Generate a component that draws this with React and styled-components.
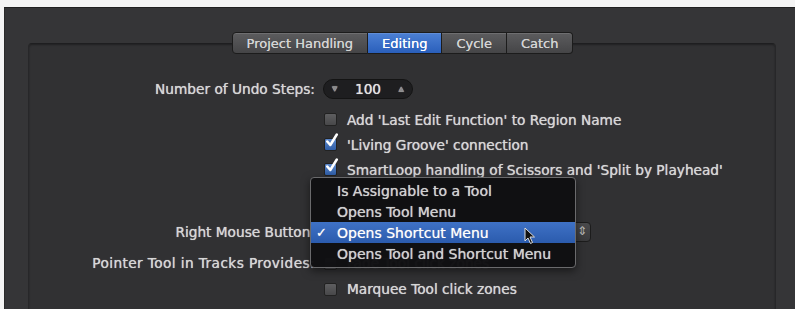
import React from 'react';
import styled, { createGlobalStyle } from 'styled-components';

const Global = createGlobalStyle`
    body {
        margin: 0;
        background: #f4f4f4;
        font-family: 'DejaVu Sans', 'Liberation Sans', sans-serif;
    }
`

const tabs = ['Project Handling', 'Editing', 'Cycle', 'Catch']

const menuItems = [
    { label: 'Is Assignable to a Tool' },
    { label: 'Opens Tool Menu' },
    { label: 'Opens Shortcut Menu', checked: true },
    { label: 'Opens Tool and Shortcut Menu' },
]

const Check = () => (
    <svg width="15" height="16" viewBox="0 0 15 16">
        <path d="M3.3 8.5 L6.3 12 L12.8 1.5" fill="none" stroke="#fff" strokeWidth="2.5" strokeLinecap="round" strokeLinejoin="round" />
    </svg>
)

const CheckBox = ({ checked }) => (
    <Box $checked={checked}>
        {checked && <CheckMark><Check /></CheckMark>}
    </Box>
)

const Cursor = () => (
    <CursorWrap>
        <svg width="12" height="18" viewBox="0 0 12 18">
            <path d="M1 1 L1 14 L4 11 L6.5 16.5 L8.5 15.5 L6 10 L10.5 10 Z" fill="#111" stroke="#ddd" strokeWidth="1" strokeLinejoin="round" />
        </svg>
    </CursorWrap>
)

const App = () => {
    return (
        <>
            <Global />
            <Window>
                <TabBar>
                    {tabs.map(t => (
                        <Tab key={t} $active={t === 'Editing'}>{t}</Tab>
                    ))}
                </TabBar>
                <Group>
                    <Form>
                        <Row $h={28}>
                            <Label>Number of Undo Steps:</Label>
                            <Stepper>
                                <Arrow>▼</Arrow>
                                <span>100</span>
                                <Arrow>▲</Arrow>
                            </Stepper>
                        </Row>
                        <Row $h={25} $mt={4}>
                            <Label />
                            <Option><CheckBox />Add 'Last Edit Function' to Region Name</Option>
                        </Row>
                        <Row $h={25}>
                            <Label />
                            <Option><CheckBox checked />'Living Groove' connection</Option>
                        </Row>
                        <Row $h={25}>
                            <Label />
                            <Option><CheckBox checked />SmartLoop handling of Scissors and 'Split by Playhead'</Option>
                        </Row>
                        <Row $h={37} />
                        <Row $h={26}>
                            <Label>Right Mouse Button:</Label>
                            <Popup><PopupArrows>⇕</PopupArrows></Popup>
                        </Row>
                        <Row $h={26} $mt={5}>
                            <Label $wide>Pointer Tool in Tracks Provides:</Label>
                            <Option $faded><CheckBox />Fade Tool click zones</Option>
                        </Row>
                        <Row $h={26}>
                            <Label />
                            <Option><CheckBox />Marquee Tool click zones</Option>
                        </Row>
                    </Form>
                </Group>
                <Menu>
                    {menuItems.map(m => (
                        <MenuItem key={m.label} $selected={m.checked}>
                            <Tick>{m.checked ? '✓' : ''}</Tick>
                            {m.label}
                        </MenuItem>
                    ))}
                    <Cursor />
                </Menu>
            </Window>
        </>
    )
}

const Window = styled.div`
    position: relative;
    margin: 7px 0 0 4px;
    height: 302px;
    overflow: hidden;
    background: #353537;
    border-top: 1px solid #202020;
    box-shadow: inset 1px 0 0 #2a2a2a;
`

const TabBar = styled.div`
    position: relative;
    z-index: 1;
    display: flex;
    justify-content: center;
    margin: 24px 0 -11px 6px;
    height: 22px;
`

const Tab = styled.div`
    display: flex;
    align-items: center;
    padding: 0 14px;
    font-size: 13px;
    color: ${p => p.$active ? '#fff' : '#d4d4d4'};
    background: ${p => p.$active
        ? 'linear-gradient(#4c80d4, #2a5fbb)'
        : 'linear-gradient(#5c5c5e, #454547)'};
    border: 1px solid #1c1c1c;
    border-left-width: 0;
    box-shadow: inset 0 1px 0 rgba(255,255,255,0.12);
    text-shadow: 0 0 0.6px currentColor;
    &:first-child {
        border-left-width: 1px;
        border-radius: 4px 0 0 4px;
    }
    &:last-child {
        border-radius: 0 4px 4px 0;
    }
`

const Group = styled.div`
    margin: 0 19px 0 24px;
    height: 300px;
    background: #313133;
    border: 1px solid #272729;
    border-top-color: #1e1e20;
    border-radius: 4px;
    box-shadow: inset 0 1px 2px rgba(0,0,0,0.35);
`

const Form = styled.div`
    padding-top: 31px;
    display: flex;
    flex-direction: column;
`

const Row = styled.div`
    display: flex;
    align-items: center;
    gap: 8px;
    height: ${p => p.$h}px;
    margin-top: ${p => p.$mt || 0}px;
`

const Label = styled.div`
    width: 286px;
    flex: none;
    text-align: right;
    font-size: 13.7px;
    letter-spacing: ${p => p.$wide ? '0.4px' : '0'};
    color: #d6d6d6;
    white-space: nowrap;
    text-shadow: 0 0 0.7px #d6d6d6;
`

const Stepper = styled.div`
    display: flex;
    align-items: center;
    justify-content: space-between;
    width: 90px;
    height: 20px;
    box-sizing: border-box;
    padding: 0 8px;
    border-radius: 10px;
    background: #1e1e20;
    border: 1px solid #141414;
    font-size: 13.7px;
    color: #e4e4e4;
    text-shadow: 0 0 0.7px #e4e4e4;
`

const Arrow = styled.span`
    font-size: 7px;
    color: #8a8a8a;
`

const Option = styled.div`
    display: flex;
    align-items: center;
    gap: 10px;
    font-size: 13.7px;
    color: ${p => p.$faded ? '#9a9a9a' : '#d6d6d6'};
    white-space: nowrap;
    text-shadow: 0 0 0.7px #d6d6d6;
`

const Box = styled.span`
    position: relative;
    width: 11px;
    height: 11px;
    flex: none;
    margin-left: 1px;
    border-radius: 2px;
    background: ${p => p.$checked
        ? 'linear-gradient(#5b86c8, #2f5ea8)'
        : 'linear-gradient(#5e5e60, #48484a)'};
    border: 1px solid #222;
`

const CheckMark = styled.span`
    position: absolute;
    left: -1px;
    top: -6px;
`

const Popup = styled.div`
    position: relative;
    width: 268px;
    height: 20px;
    box-sizing: border-box;
    border-radius: 4px;
    background: linear-gradient(#4a4a4c, #3a3a3c);
    border: 1px solid #1c1c1c;
`

const PopupArrows = styled.span`
    position: absolute;
    right: 3px;
    top: 1px;
    font-size: 12px;
    color: #bbb;
`

const Menu = styled.div`
    position: absolute;
    left: 306px;
    top: 169px;
    z-index: 2;
    width: 266px;
    box-sizing: border-box;
    padding: 2px 0 3px;
    background: rgba(16, 16, 18, 0.97);
    border: 1px solid #6a6a6c;
    border-radius: 4px;
    box-shadow: 0 3px 8px rgba(0,0,0,0.5);
`

const MenuItem = styled.div`
    display: flex;
    align-items: center;
    height: 21px;
    font-size: 14px;
    color: ${p => p.$selected ? '#fff' : '#d0d0d0'};
    background: ${p => p.$selected ? 'linear-gradient(#3f72c6, #2b5bad)' : 'none'};
    white-space: nowrap;
    text-shadow: 0 0 0.7px #d0d0d0;
`

const Tick = styled.span`
    width: 26px;
    padding-left: 5px;
    box-sizing: border-box;
    flex: none;
    font-size: 13px;
`

const CursorWrap = styled.span`
    position: absolute;
    left: 213px;
    top: 49px;
`

export default App
